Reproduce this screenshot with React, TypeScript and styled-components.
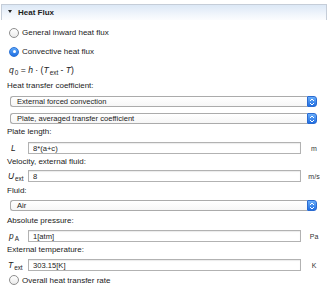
import React from 'react'
import styled, { createGlobalStyle } from 'styled-components'

const GlobalStyle = createGlobalStyle`
  body {
    margin: 0;
    background: #fff;
    font-family: "Liberation Sans", Arial, sans-serif;
    color: #222;
  }
`

const Panel = styled.div`
  width: 327px;
  height: 292px;
  overflow: hidden;
  font-size: 8px;
`

const Header = styled.div`
  margin: 4px 0 0 1px;
  height: 16px;
  box-sizing: border-box;
  border: 1px solid #c5cdd8;
  border-bottom: none;
  background: linear-gradient(#dce8f6, #f3f7fc 70%, #fbfcfe);
  display: flex;
  align-items: center;
  padding-left: 6px;
  gap: 6px;
  font-weight: bold;
  font-size: 8px;
  color: #1e1e1e;
`

const Caret = styled.span`
  width: 0;
  height: 0;
  border-left: 2.5px solid transparent;
  border-right: 2.5px solid transparent;
  border-top: 3px solid #222;
  margin-top: -2px;
`

const RadioRow = styled.div<{ $mt?: number; $h?: number }>`
  display: flex;
  align-items: center;
  height: ${p => p.$h ?? 19}px;
  margin-top: ${p => p.$mt ?? 0}px;
  padding-left: 9px;
  gap: 3px;
`

const RadioDot = styled.span<{ $on?: boolean }>`
  width: 10px;
  height: 10px;
  box-sizing: border-box;
  border-radius: 50%;
  position: relative;
  border: 1px solid ${p => (p.$on ? '#2b72d6' : '#8e8e8e')};
  background: ${p =>
    p.$on ? 'linear-gradient(#5ea8f8, #1f6fe3)' : 'linear-gradient(#ffffff, #ebebeb)'};
  &::after {
    content: '';
    display: ${p => (p.$on ? 'block' : 'none')};
    position: absolute;
    left: 2.5px;
    top: 2.5px;
    width: 3px;
    height: 3px;
    border-radius: 50%;
    background: #fff;
  }
`

const Formula = styled.div`
  height: 18px;
  display: flex;
  align-items: center;
  padding-left: 9px;
  font-size: 8.6px;
  color: #222;
  white-space: pre;
`

const Var = styled.i`
  font-style: italic;
`

const Sub = styled.span`
  font-size: 6.4px;
  position: relative;
  top: 2px;
  margin-left: 1px;
`

const FieldLabel = styled.div<{ $mt?: number }>`
  height: 12px;
  line-height: 12px;
  margin-top: ${p => p.$mt ?? 2}px;
  padding-left: 7px;
`

const SelectWrap = styled.div<{ $mt?: number }>`
  display: flex;
  margin: ${p => p.$mt ?? 0}px 0 0 10px;
  width: 307px;
  height: 11px;
`

const SelectField = styled.div`
  flex: 1;
  box-sizing: border-box;
  border: 1px solid #ababab;
  border-right: none;
  border-radius: 3px 0 0 3px;
  background: linear-gradient(#ffffff, #f6f6f6);
  padding-left: 6px;
  line-height: 9px;
  font-size: 7.6px;
`

const SelectButton = styled.div`
  width: 10px;
  box-sizing: border-box;
  border: 1px solid #2a6ad0;
  border-radius: 0 3px 3px 0;
  background: linear-gradient(#6aaefa, #1f6ee2);
  display: flex;
  align-items: center;
  justify-content: center;
`

const InputRow = styled.div<{ $mt?: number }>`
  display: grid;
  grid-template-columns: 20px 273px 26px;
  align-items: center;
  margin-top: ${p => p.$mt ?? 3}px;
  padding-left: 8px;
  height: 12px;
`

const Symbol = styled.span<{ $indent?: number }>`
  padding-left: ${p => p.$indent ?? 0}px;
  font-size: 8.4px;
  white-space: nowrap;
`

const Field = styled.input`
  height: 12px;
  box-sizing: border-box;
  border: 1px solid #b2b2b2;
  box-shadow: inset 0 1px 1px rgba(0, 0, 0, 0.08);
  padding: 0 4px;
  margin: 0;
  font-family: "Liberation Sans", Arial, sans-serif;
  font-size: 7.6px;
  color: #222;
  outline: none;
  background: #fff;
`

const Unit = styled.span`
  text-align: center;
  font-size: 7px;
  color: #333;
`

function Select({ text, mt }: { text: string; mt?: number }) {
  return (
    <SelectWrap $mt={mt}>
      <SelectField>{text}</SelectField>
      <SelectButton>
        <svg width="6" height="8" viewBox="0 0 6 8">
          <path d="M1 3 L3 1 L5 3 M1 5 L3 7 L5 5" fill="none" stroke="#fff" strokeWidth="1" />
        </svg>
      </SelectButton>
    </SelectWrap>
  )
}

function App() {
  return (
    <Panel>
      <GlobalStyle />
      <Header>
        <Caret />
        Heat Flux
      </Header>

      <RadioRow $mt={3}>
        <RadioDot />
        General inward heat flux
      </RadioRow>
      <RadioRow>
        <RadioDot $on />
        Convective heat flux
      </RadioRow>

      <Formula>
        <Var>q</Var><Sub>0</Sub> = <Var>h</Var> · (<Var>T</Var><Sub>ext</Sub> - <Var>T</Var>)
      </Formula>

      <FieldLabel $mt={1}>Heat transfer coefficient:</FieldLabel>
      <Select text="External forced convection" mt={4} />
      <Select text="Plate, averaged transfer coefficient" mt={6} />

      <FieldLabel $mt={2}>Plate length:</FieldLabel>
      <InputRow $mt={4}>
        <Symbol $indent={3}><Var>L</Var></Symbol>
        <Field readOnly value="8*(a+c)" />
        <Unit>m</Unit>
      </InputRow>

      <FieldLabel $mt={2}>Velocity, external fluid:</FieldLabel>
      <InputRow $mt={2}>
        <Symbol><Var>U</Var><Sub>ext</Sub></Symbol>
        <Field readOnly value="8" />
        <Unit>m/s</Unit>
      </InputRow>

      <FieldLabel $mt={3}>Fluid:</FieldLabel>
      <Select text="Air" mt={3} />

      <FieldLabel $mt={4}>Absolute pressure:</FieldLabel>
      <InputRow $mt={3}>
        <Symbol $indent={1}><Var>p</Var><Sub>A</Sub></Symbol>
        <Field readOnly value="1[atm]" />
        <Unit>Pa</Unit>
      </InputRow>

      <FieldLabel $mt={2}>External temperature:</FieldLabel>
      <InputRow $mt={3}>
        <Symbol><Var>T</Var><Sub>ext</Sub></Symbol>
        <Field readOnly value="303.15[K]" />
        <Unit>K</Unit>
      </InputRow>

      <RadioRow $mt={2} $h={14}>
        <RadioDot />
        Overall heat transfer rate
      </RadioRow>
    </Panel>
  )
}

export default App
